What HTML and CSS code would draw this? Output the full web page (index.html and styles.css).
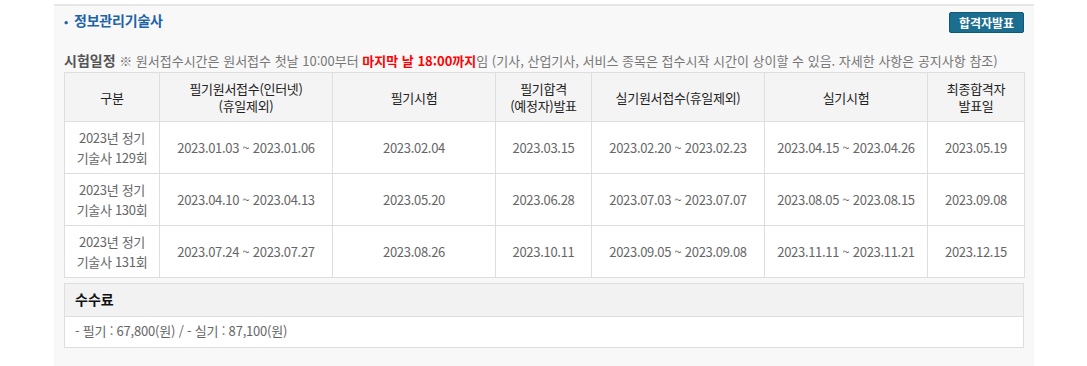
FILE: index.html
```html
<!DOCTYPE html>
<html lang="ko">
<head>
<meta charset="utf-8">
<link rel="stylesheet" href="styles.css">
</head>
<body>
<div class="page">
  <div class="panel">
    <div class="head">
      <h2 class="title"><span class="dot">•</span>정보관리기술사</h2>
      <a class="btn">합격자발표</a>
    </div>
    <p class="note"><strong class="lbl">시험일정</strong> ※ 원서접수시간은 원서접수 첫날 10:00부터 <b class="red">마지막 날 18:00까지</b>임 (기사, 산업기사, 서비스 종목은 접수시작 시간이 상이할 수 있음. 자세한 사항은 공지사항 참조)</p>
    <table class="sched">
      <colgroup>
        <col class="c1"><col class="c2"><col class="c3"><col class="c4"><col class="c5"><col class="c6"><col class="c7">
      </colgroup>
      <thead>
        <tr>
          <th>구분</th>
          <th>필기원서접수(인터넷)<br>(휴일제외)</th>
          <th>필기시험</th>
          <th>필기합격<br>(예정자)발표</th>
          <th>실기원서접수(휴일제외)</th>
          <th>실기시험</th>
          <th>최종합격자<br>발표일</th>
        </tr>
      </thead>
      <tbody>
        <tr>
          <td>2023년 정기<br>기술사 129회</td>
          <td>2023.01.03 ~ 2023.01.06</td>
          <td>2023.02.04</td>
          <td>2023.03.15</td>
          <td>2023.02.20 ~ 2023.02.23</td>
          <td>2023.04.15 ~ 2023.04.26</td>
          <td>2023.05.19</td>
        </tr>
        <tr>
          <td>2023년 정기<br>기술사 130회</td>
          <td>2023.04.10 ~ 2023.04.13</td>
          <td>2023.05.20</td>
          <td>2023.06.28</td>
          <td>2023.07.03 ~ 2023.07.07</td>
          <td>2023.08.05 ~ 2023.08.15</td>
          <td>2023.09.08</td>
        </tr>
        <tr>
          <td>2023년 정기<br>기술사 131회</td>
          <td>2023.07.24 ~ 2023.07.27</td>
          <td>2023.08.26</td>
          <td>2023.10.11</td>
          <td>2023.09.05 ~ 2023.09.08</td>
          <td>2023.11.11 ~ 2023.11.21</td>
          <td>2023.12.15</td>
        </tr>
      </tbody>
    </table>
    <div class="fee">
      <div class="fee-head">수수료</div>
      <div class="fee-body">- 필기 : 67,800(원) / - 실기 : 87,100(원)</div>
    </div>
  </div>
</div>
</body>
</html>
```

FILE: styles.css
```css
html, body {
  margin: 0;
  padding: 0;
  background: #fff;
}
body {
  font-family: "Noto Sans CJK KR", "Noto Sans", sans-serif;
  font-size: 13px;
  color: #666;
}
.page {
  padding-top: 4px;
  padding-left: 54px;
}
.panel {
  width: 960px;
  height: 360px;
  padding: 0 10px;
  background: #f8f8f8;
  border-top: 2px solid #e6e6e6;
}
.head {
  display: flex;
  justify-content: space-between;
  align-items: flex-start;
  height: 44px;
  padding-top: 4px;
  box-sizing: border-box;
}
.title {
  margin: 0;
  font-size: 14px;
  font-weight: bold;
  color: #1e63a8;
  line-height: 20px;
  letter-spacing: -0.2px;
}
.dot {
  display: inline-block;
  width: 10px;
  font-size: 11px;
}
.btn {
  display: block;
  width: 75px;
  height: 21px;
  margin-top: 2px;
  box-sizing: border-box;
  background: #1b6e90;
  border: 1px solid #0f5877;
  border-radius: 2px;
  color: #fff;
  font-size: 12px;
  font-weight: bold;
  line-height: 19px;
  text-align: center;
}
.note {
  margin: 0;
  height: 20px;
  line-height: 20px;
  font-size: 13px;
  color: #777;
  white-space: nowrap;
  letter-spacing: 0;
}
.lbl {
  font-size: 14px;
  color: #555;
  letter-spacing: 0;
}
.red {
  color: #f00;
}
.sched {
  width: 960px;
  border-collapse: collapse;
  table-layout: fixed;
  background: #fff;
  margin-top: 2px;
}
.c1 { width: 95px; }
.c2 { width: 173px; }
.c3 { width: 163px; }
.c4 { width: 96px; }
.c5 { width: 173px; }
.c6 { width: 163px; }
.c7 { width: 97px; }
.sched th, .sched td {
  border: 1px solid #dedede;
  text-align: center;
  padding: 0;
  font-size: 13px;
  letter-spacing: -0.3px;
}
.sched th {
  height: 48px;
  background: #f4f4f4;
  color: #222;
  font-weight: normal;
  line-height: 17px;
}
.sched td {
  height: 51px;
  color: #666;
  line-height: 20px;
}
.fee {
  margin-top: 5px;
  border: 1px solid #dedede;
  background: #fff;
}
.fee-head {
  height: 32px;
  line-height: 30px;
  padding-left: 10px;
  background: #f2f2f2;
  border-bottom: 1px solid #dedede;
  color: #111;
  font-weight: bold;
  font-size: 14px;
}
.fee-body {
  height: 30px;
  line-height: 28px;
  padding-left: 10px;
  color: #666;
  font-size: 13px;
  letter-spacing: -0.2px;
}
```
